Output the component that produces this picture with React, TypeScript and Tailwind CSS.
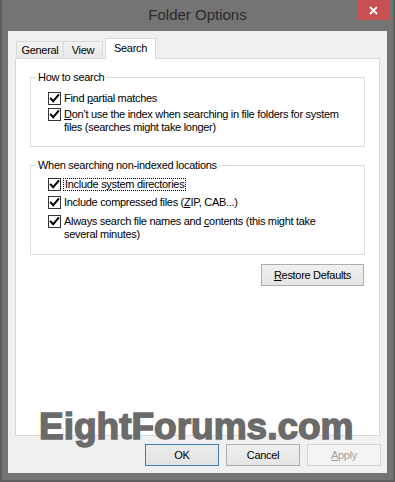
import React from "react";

function Check() {
  return (
    <span className="w-[13px] h-[13px] shrink-0 border border-[#333333] bg-white flex items-center justify-center">
      <svg width="11" height="11" viewBox="0 0 11 11">
        <path d="M1.8 5.6 L4.2 8.2 L9.3 2.2" fill="none" stroke="#000" strokeWidth="2" strokeLinecap="square" />
      </svg>
    </span>
  );
}

function Row({ children, className = "" }: { children: React.ReactNode; className?: string }) {
  return (
    <div className={"flex items-start gap-[3px] pl-[17px] " + className}>
      <Check />
      <div className="leading-[13px]">{children}</div>
    </div>
  );
}

function Button({ children, variant = "normal", className = "" }: { children: React.ReactNode; variant?: "default" | "normal" | "disabled"; className?: string }) {
  const styles =
    variant === "default"
      ? "border-[#3c7fb1] bg-gradient-to-b from-[#ececec] to-[#e2e2e2] text-black"
      : variant === "disabled"
      ? "border-[#d5d5d5] bg-[#f4f4f4] text-[#a0a0a0]"
      : "border-[#acacac] bg-gradient-to-b from-[#f0f0f0] to-[#e5e5e5] text-black";
  return (
    <div className={"h-[22px] border flex items-center justify-center " + styles + " " + className}>
      {children}
    </div>
  );
}

export default function App() {
  return (
    <div className="relative w-[395px] h-[482px] bg-[#747474] flex flex-col border-x-2 border-b-2 border-[#5e5e5e] font-['Liberation_Sans',Arial,sans-serif] text-[11px] tracking-[-0.3px] text-black">
      {/* title bar */}
      <div className="h-[31px] grid grid-cols-[1fr_auto_1fr] items-start -mx-[2px]">
        <div />
        <div className="h-[31px] flex items-center text-[15px] tracking-normal text-[#2a2a2a]">Folder Options</div>
        <div className="flex justify-end pr-[6px]">
          <div className="w-[31px] h-[20px] bg-[#c75050] flex items-center justify-center">
            <svg width="9" height="9" viewBox="0 0 9 9">
              <path d="M1 1 L8 8 M8 1 L1 8" stroke="#fff" strokeWidth="1.8" />
            </svg>
          </div>
        </div>
      </div>

      {/* client area */}
      <div className="mx-[6px] h-[442px] bg-[#f0f0f0] flex flex-col px-[7px] pt-[6px]">
        {/* tabs */}
        <div className="h-[21px] flex items-end pl-[1px]">
          <div className="h-[17px] w-[48px] border border-b-0 border-[#d9d9d9] bg-gradient-to-b from-[#f2f2f2] to-[#e8e8e8] flex items-center justify-center">General</div>
          <div className="h-[17px] w-[39px] border border-b-0 border-l-0 border-[#d9d9d9] bg-gradient-to-b from-[#f2f2f2] to-[#e8e8e8] flex items-center justify-center">View</div>
          <div className="h-[21px] w-[51px] ml-[2px] border border-b-0 border-[#d9d9d9] bg-white flex items-center justify-center pb-[2px] relative z-10 -mb-[1px]">Search</div>
        </div>

        {/* panel */}
        <div className="h-[378px] border border-[#d9d9d9] bg-white flex flex-col px-[14px] pt-[18px]">
          {/* group 1 */}
          <div className="h-[70px] border border-[#dcdcdc] flex flex-col">
            <span className="self-start -mt-[8px] ml-[5px] px-[2px] bg-white leading-[14px]">How to search</span>
            <Row className="mt-[8px] pr-[8px]">
              Find <u>p</u>artial matches
            </Row>
            <Row className="mt-[3px] pr-[8px]">
              <u>D</u>on’t use the index when searching in file folders for system files (searches might take longer)
            </Row>
          </div>

          {/* group 2 */}
          <div className="h-[90px] mt-[18px] border border-[#dcdcdc] flex flex-col">
            <span className="self-start -mt-[8px] ml-[5px] px-[2px] bg-white leading-[14px]">When searching non-indexed locations</span>
            <Row className="mt-[6px] pr-[8px]">
              <span className="border border-dotted border-black px-[1px] -ml-[1px] -my-[1px] inline-block leading-[11px]">
                Include s<u>y</u>stem directories
              </span>
            </Row>
            <Row className="mt-[5px] pr-[8px]">
              Include compressed files (<u>Z</u>IP, CAB...)
            </Row>
            <Row className="mt-[6px] pr-[36px]">
              Always search file names and <u>c</u>ontents (this might take several minutes)
            </Row>
          </div>

          <div className="flex justify-end mt-[9px] pr-[1px]">
            <Button className="w-[103px] h-[21px]">
              <span><u>R</u>estore Defaults</span>
            </Button>
          </div>
        </div>

        {/* buttons */}
        <div className="flex justify-end gap-[7px] mt-[8px] -mr-[1px]">
          <Button variant="default" className="w-[74px]">OK</Button>
          <Button className="w-[74px]">Cancel</Button>
          <Button variant="disabled" className="w-[74px]">
            <span><u>A</u>pply</span>
          </Button>
        </div>
      </div>

      {/* watermark */}
      <div className="absolute left-[37px] top-[408px] text-[37px] leading-[37px] font-bold tracking-normal text-[#6b6b6b] [-webkit-text-stroke:1.5px_#6b6b6b] [text-shadow:0_0_2px_rgba(255,255,255,0.6)] pointer-events-none whitespace-nowrap">
        EightForums.com
      </div>
    </div>
  );
}
